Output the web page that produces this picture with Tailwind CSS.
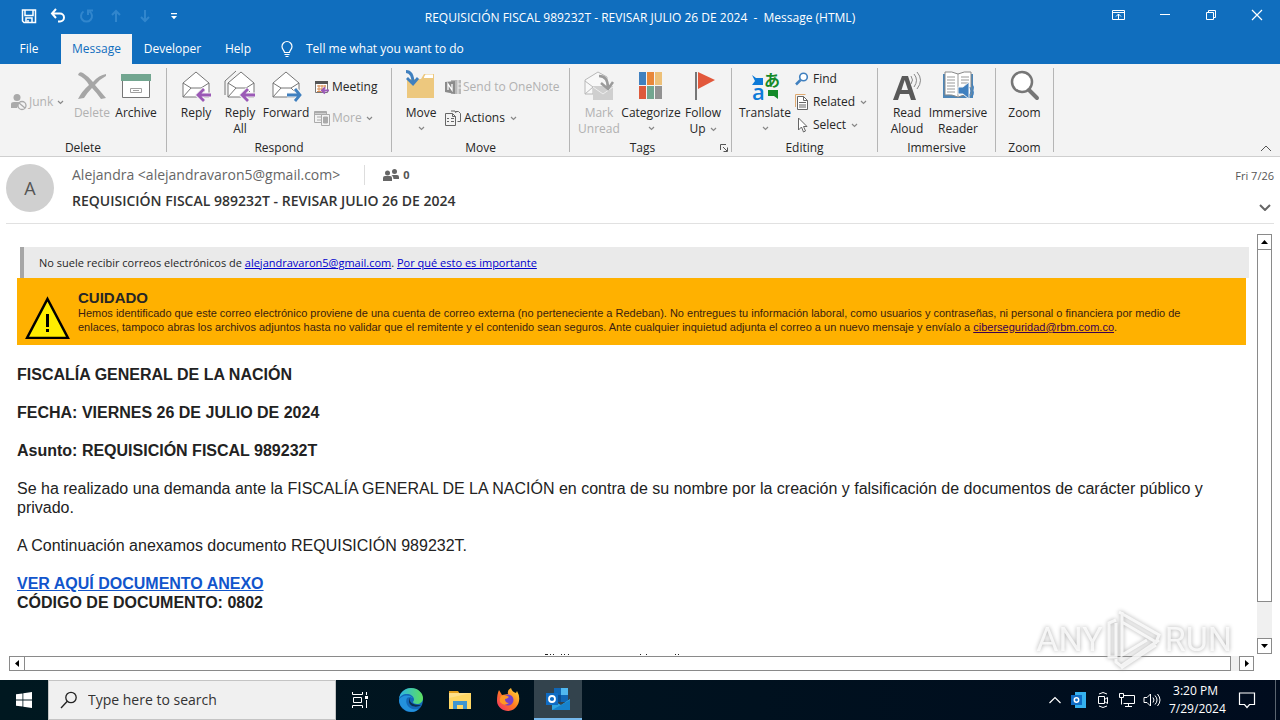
<!DOCTYPE html>
<html lang="es">
  <head>
    <meta charset="UTF-8" />
    <title>REQUISICIÓN FISCAL 989232T - Message (HTML)</title>
    <script src="https://cdn.jsdelivr.net/npm/@tailwindcss/browser@4"></script>
  </head>

  <body class="flex h-screen flex-col overflow-hidden bg-white font-['Open_Sans',sans-serif] text-xs text-[#262626]">
    <svg class="hidden">
      <symbol id="caret" viewBox="0 0 7 5"><path d="M1 1l2.5 2.5L6 1" fill="none" stroke="#888" stroke-width="1.2" /></symbol>
      <symbol id="envelope" viewBox="0 0 32 32">
        <path d="M3 13L16 2l13 11v14H3z" fill="#fff" stroke="#767676" />
        <path d="M3 13l8 5h10l8-5M3 27l8-9M21 18l4 4" fill="none" stroke="#767676" />
      </symbol>
    </svg>

    <!-- Title bar -->
    <header class="relative flex h-8 shrink-0 items-center bg-[#106ebe] text-white">
      <div class="flex items-center gap-[13px] pl-[21px]">
        <button aria-label="Save">
          <svg class="size-4" viewBox="0 0 16 16" fill="none" stroke="#fff" stroke-width="1.5"><path d="M1.500 2h13v12.500H3L1.500 13zM4 2v5.500h8V2M5 14.500V10h6v4.500M7 12v2.500" /></svg>
        </button>
        <button aria-label="Undo">
          <svg class="size-4" viewBox="0 0 16 16" fill="none" stroke="#fff" stroke-width="2"><path d="M6 1L2 5.500 6 10M2.500 5.500H10a4 4 0 0 1 0 8H8" /></svg>
        </button>
        <button aria-label="Redo" class="text-[#3186cd]">
          <svg class="size-4" viewBox="0 0 16 16" fill="none" stroke="currentColor" stroke-width="2"><path d="M4.500 3.500a5.500 5.500 0 1 0 6 0M9 7V2.500h5" /></svg>
        </button>
        <button aria-label="Previous item" class="text-[#3186cd]">
          <svg class="size-4" viewBox="0 0 16 16" fill="none" stroke="currentColor" stroke-width="2"><path d="M8 14V3M4 7l4-4 4 4" /></svg>
        </button>
        <button aria-label="Next item" class="text-[#3186cd]">
          <svg class="size-4" viewBox="0 0 16 16" fill="none" stroke="currentColor" stroke-width="2"><path d="M8 2v11M4 9l4 4 4-4" /></svg>
        </button>
        <button aria-label="Customize toolbar">
          <svg class="size-4" viewBox="0 0 16 16"><path d="M5 5h6v1.300H5zM5 8h6l-3 3.200z" fill="#fff" /></svg>
        </button>
      </div>
      <h1 class="absolute inset-x-0 top-2 text-center leading-5 whitespace-pre">REQUISICIÓN FISCAL 989232T - REVISAR JULIO 26 DE 2024  -  Message (HTML)</h1>
      <div class="z-10 ml-auto flex items-center gap-[30px] pr-[15px]">
        <button aria-label="Ribbon display options">
          <svg class="size-4" viewBox="0 0 16 16" fill="none" stroke="#fff"><path d="M1.500 2.500h12v9h-12zM1.500 4.500h12M7.500 11V6M5 8.500L7.500 6 10 8.500" /></svg>
        </button>
        <button aria-label="Minimize">
          <svg class="size-4" viewBox="0 0 16 16" fill="none" stroke="#fff"><path d="M3 6.500h10" /></svg>
        </button>
        <button aria-label="Restore">
          <svg class="size-4" viewBox="0 0 16 16" fill="none" stroke="#fff"><path d="M3.500 4.500h7v7h-7zM5.500 4.500v-2h7v7h-2" /></svg>
        </button>
        <button aria-label="Close">
          <svg class="size-4" viewBox="0 0 16 16" fill="none" stroke="#fff" stroke-width="1.200"><path d="M3 2l10 10M13 2l-10 10" /></svg>
        </button>
      </div>
    </header>

    <!-- Tabs -->
    <nav class="flex h-8 shrink-0 items-end bg-[#106ebe] text-white">
      <button class="h-[30px] w-[58px]">File</button>
      <button class="ml-[3px] h-[30px] w-[71px] bg-[#f3f3f3] text-[#106ebe]">Message</button>
      <button class="h-[30px] w-[81px]">Developer</button>
      <button class="h-[30px] w-[50px]">Help</button>
      <button class="flex h-[30px] items-center gap-[11px] pl-4">
        <svg class="h-[18px] w-4" viewBox="0 0 16 18" fill="none" stroke="#fff" stroke-width="1.200"><path d="M5.500 12.500c0-2-2.500-3-2.500-6a5 5 0 0 1 10 0c0 3-2.500 4-2.500 6zM5.500 14.500h5M6.500 16.500h3" /></svg>
        Tell me what you want to do
      </button>
    </nav>

    <!-- Ribbon -->
    <div class="flex h-[93px] shrink-0 border-b border-[#cfcfcf] bg-[#f3f3f3] py-1 leading-4">
      <section class="flex w-[167px] flex-col border-r border-[#b5b5b5]">
        <div class="flex grow">
          <button class="flex w-[70px] items-center gap-px pb-1 pl-[10px] text-[#b1b1b1]">
            <svg class="size-[18px]" viewBox="0 0 18 18"><circle cx="7" cy="4.500" r="3.500" fill="#aaa" /><path d="M1 15V11q0-2 3-2h6l-3 6z" fill="#aaa" /><circle cx="12" cy="12.500" r="4" fill="#f3f3f3" stroke="#aaa" stroke-width="1.300" /><path d="M9 10l6 5" stroke="#aaa" stroke-width="1.300" /></svg>
            Junk
            <svg class="ml-[3px] h-[5px] w-[7px]"><use href="#caret" /></svg>
          </button>
          <button class="flex w-11 flex-col items-center pt-[2px] text-[#b1b1b1]">
            <svg class="mb-[3px] size-8" viewBox="0 0 32 32" fill="#a6a6a6"><path d="M2 5q1-4 5-2 5 3 10 9Q23 5 30 4v2q-6 3-11 9 6 7 11 13l-5 1q-5-7-9-11-5 5-8 10l-6 1q4-8 11-14Q9 8 2 5z" /></svg>
            Delete
          </button>
          <button class="flex w-11 flex-col items-center pt-[2px]">
            <svg class="mb-[3px] size-8" viewBox="0 0 32 32"><path d="M2.500 9.500h27v18h-27z" fill="#fff" stroke="#767676" /><path d="M1 4h30v7H1z" fill="#72a690" /><path d="M10.500 18.500h11v4h-11zM13 20.500h6" fill="#fff" stroke="#a0a0a0" /></svg>
            Archive
          </button>
        </div>
        <h2 class="-mb-1 text-center">Delete</h2>
      </section>

      <section class="flex w-[225px] flex-col border-r border-[#b5b5b5]">
        <div class="flex grow pl-[7px]">
          <button class="flex w-11 flex-col items-center pt-[2px]">
            <svg class="mb-[3px] size-8"><use href="#envelope" /><path d="M31 25H18M24 19l-6 6 6 6" fill="none" stroke="#f3f3f3" stroke-width="5" /><path d="M31 25H18M24 19l-6 6 6 6" fill="none" stroke="#9b59b6" stroke-width="2.800" /></svg>
            Reply
          </button>
          <button class="flex w-11 flex-col items-center pt-[2px]">
            <svg class="mb-[3px] size-8"><path d="M1 25V11L12 1" fill="none" stroke="#767676" /><g><use href="#envelope" x="1" /></g><path d="M31 25H18M24 19l-6 6 6 6" fill="none" stroke="#f3f3f3" stroke-width="5" /><path d="M31 25H18M24 19l-6 6 6 6" fill="none" stroke="#9b59b6" stroke-width="2.800" /></svg>
            Reply All
          </button>
          <button class="flex w-12 flex-col items-center pt-[2px]">
            <svg class="mb-[3px] size-8"><use href="#envelope" /><path d="M17 25h13M25 19l6 6-6 6" fill="none" stroke="#f3f3f3" stroke-width="5" /><path d="M17 25h13M25 19l5 6-5 6" fill="none" stroke="#4080bf" stroke-width="2.800" /></svg>
            Forward
          </button>
          <div class="flex flex-col gap-[7px] pt-[7px] pl-1">
            <button class="flex h-6 items-center gap-[2px]">
              <svg class="size-4" viewBox="0 0 16 16" fill="none"><path d="M1.500 2.500h12v11h-12z" fill="#fff" stroke="#777" /><path d="M1 2h13v3H1z" fill="#555" /><path d="M3 7h9M3 10h5M3 12.500h4M5 6v7M8 6v7M11 6v3" stroke="#d88c50" /><path d="M15 11.500H8M11 8.500l-3 3 3 3" stroke="#9b59b6" stroke-width="2" /></svg>
              Meeting
            </button>
            <button class="flex h-6 items-center gap-[2px] text-[#b1b1b1]">
              <svg class="size-4" viewBox="0 0 16 16" fill="none" stroke="#aaa"><path d="M.500 1.500h12v11H.500zM.500 4.500h12M3 7h5M3 10h5" /><path d="M.500 2.500h12" stroke-width="2" /><path d="M7.500 4.500h8v11h-8z" fill="#f3f3f3" /><path d="M9.500 7h4v6h-4z" fill="#aaa" /></svg>
              More
              <svg class="ml-[2px] h-[5px] w-[7px]"><use href="#caret" /></svg>
            </button>
          </div>
        </div>
        <h2 class="-mb-1 text-center">Respond</h2>
      </section>

      <section class="flex w-[178px] flex-col border-r border-[#b5b5b5]">
        <div class="flex grow pl-[6px]">
          <button class="flex w-[46px] flex-col items-center pt-[2px]">
            <svg class="mb-[3px] size-8" viewBox="0 0 32 32"><path d="M2 9h14l3-5h10v24H2z" fill="#edc87e" /><path d="M19 7l1.500-2.500H28V8h-9z" fill="#fff" /><path d="M1 1.500q7 0 7 12M2 8l6 6 5-6" fill="none" stroke="#4080bf" stroke-width="2.800" /></svg>
            Move
            <svg class="mt-[5px] h-[5px] w-[7px]"><use href="#caret" /></svg>
          </button>
          <div class="flex flex-col gap-[7px] pt-[7px] pl-px">
            <button class="flex h-6 items-center gap-[2px] text-[#b1b1b1]">
              <svg class="size-4" viewBox="0 0 16 16"><path d="M6 1h10v14H6z" fill="#b9b9b9" /><path d="M13 1v14M13 5h3M13 9h3" stroke="#eee" /><path d="M0 3l10-1v13L0 13z" fill="#8b8b8b" /><path d="M3 11V5l4 6V5" fill="none" stroke="#fff" stroke-width="1.300" /></svg>
              Send to OneNote
            </button>
            <button class="flex h-6 items-center gap-[3px]">
              <svg class="size-4" viewBox="0 0 16 16" fill="none" stroke="#666"><path d="M10.500 1.500h3l2 2v8h-3" /><path d="M.500 3.500h7l3 3v9H.500zM7.500 3.500v3h3M2 8.500h2M2 11.500h2M6 8.500h3M6 11.500h3M6 1h4l1 2" /></svg>
              Actions
              <svg class="ml-[2px] h-[5px] w-[7px]"><use href="#caret" /></svg>
            </button>
          </div>
        </div>
        <h2 class="-mb-1 text-center">Move</h2>
      </section>

      <section class="relative flex w-[162px] flex-col border-r border-[#b5b5b5]">
        <div class="flex grow pl-[6px]">
          <button class="flex w-[46px] flex-col items-center pt-[2px] text-[#b1b1b1]">
            <svg class="mb-[3px] size-8" viewBox="0 0 32 32"><path d="M2 10L15 2l9 5v10H10v7H2z" fill="#f8f8f8" stroke="#b8b8b8" /><path d="M2 11l8 6-8 7" fill="none" stroke="#b8b8b8" /><path d="M10 16h20v14H10z" fill="#cfcfcf" /><path d="M10 17l10 7 10-7" fill="none" stroke="#eee" /><path d="M16 6q9 0 9 12M18 13l7 6 5-7" fill="none" stroke="#9b9b9b" stroke-width="2.500" /></svg>
            Mark Unread
          </button>
          <button class="flex w-[58px] flex-col items-center pt-[2px]">
            <svg class="mb-[3px] size-8" viewBox="0 0 32 32"><path d="M4 2h7v13H4z" fill="#4080bf" /><path d="M12 2h7v13h-7z" fill="#e8873a" /><path d="M20 2h7v13h-7z" fill="#edc078" /><path d="M4 16h7v13H4z" fill="#dd5a3c" /><path d="M12 16h7v13h-7z" fill="#72a690" /><path d="M20 16h7v13h-7z" fill="#929292" /></svg>
            Categorize
            <svg class="mt-[5px] h-[5px] w-[7px]"><use href="#caret" /></svg>
          </button>
          <button class="flex w-[46px] flex-col items-center pt-[2px]">
            <svg class="mb-[3px] size-8" viewBox="0 0 32 32"><path d="M8 2h2v28H8z" fill="#767676" /><path d="M11 2l17 8-17 9z" fill="#e2583b" /></svg>
            Follow
            <span class="flex items-center gap-1">Up <svg class="h-[5px] w-[7px]"><use href="#caret" /></svg></span>
          </button>
        </div>
        <h2 class="-mb-1 pr-4 text-center">Tags</h2>
        <button aria-label="Tags options" class="absolute right-[3px] bottom-0">
          <svg class="size-2" viewBox="0 0 8 8" fill="none" stroke="#555"><path d="M.500 6V.500H6M3 3l4 4M7.500 3.500v4h-4" /></svg>
        </button>
      </section>

      <section class="flex w-[146px] flex-col border-r border-[#b5b5b5]">
        <div class="flex grow pl-[6px]">
          <button class="flex w-[54px] flex-col items-center pt-[2px]">
            <svg class="mb-[3px] size-8 overflow-visible" viewBox="0 0 32 32"><path d="M3 5l4 3h7v7H3l3-4z" fill="#0d7ad8" /><path d="M29 29l-4-3h-6v-6h10z" fill="#148a28" /><text x="3" y="30" font-size="22" font-weight="600" fill="#0d7ad8">a</text><text x="15" y="16" font-family="Noto Sans CJK JP" font-size="16" font-weight="700" fill="#148a28">あ</text></svg>
            Translate
            <svg class="mt-[5px] h-[5px] w-[7px]"><use href="#caret" /></svg>
          </button>
          <div class="flex flex-col pl-[2px]">
            <button class="flex h-[22px] items-center gap-[3px]">
              <svg class="size-4" viewBox="0 0 16 16" fill="none" stroke="#4080bf"><circle cx="9.500" cy="6" r="3.800" fill="#fff" stroke-width="1.600" /><path d="M6.500 9L2 13.500" stroke-width="2.500" /></svg>
              Find
            </button>
            <button class="flex h-6 items-center gap-[3px]">
              <svg class="size-4" viewBox="0 0 16 16" fill="none" stroke="#666"><path d="M1.500 13V.500h10" stroke="#e0aa70" /><path d="M3.500 2.500h6l4 4v9h-10z" fill="#fff" /><path d="M9.500 2.500v4h4M5 8.500h7M5 11h7M5 13h7" /></svg>
              Related
              <svg class="ml-[2px] h-[5px] w-[7px]"><use href="#caret" /></svg>
            </button>
            <button class="flex h-[22px] items-center gap-[3px]">
              <svg class="size-4" viewBox="0 0 16 16" fill="#fff" stroke="#666"><path d="M4.500 1v12l3-3 2 5 2-1-2-4.500H13z" /></svg>
              Select
              <svg class="ml-[2px] h-[5px] w-[7px]"><use href="#caret" /></svg>
            </button>
          </div>
        </div>
        <h2 class="-mb-1 text-center">Editing</h2>
      </section>

      <section class="flex w-[118px] flex-col border-r border-[#b5b5b5]">
        <div class="flex grow pl-[6px]">
          <button class="flex w-[46px] flex-col items-center pt-[2px]">
            <svg class="mb-[3px] size-8" viewBox="0 0 32 32"><path d="M2 30L11 6h6l8 24h-5l-2-6H9l-2 6zM10.500 20H17l-3.300-10z" fill="#595959" /><path d="M20 6q3 4 0 8M23 4q5 6 0 13M26 2q7 8 0 17" fill="none" stroke="#888" /></svg>
            Read Aloud
          </button>
          <button class="flex w-14 flex-col items-center pt-[2px]">
            <svg class="mb-[3px] size-8" viewBox="0 0 32 32"><path d="M1 4h30v24H1z" fill="#4d86b8" /><path d="M3 2q7-1 13 2 6-3 13-2v23q-7-1-13 2-6-3-13-2z" fill="#fff" stroke="#888" /><path d="M16 4v22M5 7h8M5 10h8M5 13h8M5 16h8M5 19h8M5 22h8M19 7h8M19 10h8M19 13h8" stroke="#999" /><path d="M16 17h5l6-5v17l-6-5h-5z" fill="#4080bf" stroke="#f3f3f3" /><path d="M28 17q2 4 0 8M30 14q4 6 0 13" fill="none" stroke="#4080bf" /></svg>
            Immersive Reader
          </button>
        </div>
        <h2 class="-mb-1 text-center">Immersive</h2>
      </section>

      <section class="flex w-[58px] flex-col border-r border-[#b5b5b5]">
        <div class="flex grow justify-center">
          <button class="flex w-11 flex-col items-center pt-[2px]">
            <svg class="mb-[3px] size-8" viewBox="0 0 32 32"><circle cx="13" cy="12" r="10" fill="#fff" stroke="#767676" stroke-width="2.500" /><path d="M20 20l8 8" stroke="#767676" stroke-width="4" stroke-linecap="round" /></svg>
            Zoom
          </button>
        </div>
        <h2 class="-mb-1 text-center">Zoom</h2>
      </section>

      <button aria-label="Collapse ribbon" class="mt-auto mr-2 ml-auto">
        <svg class="h-[7px] w-3" viewBox="0 0 12 7" fill="none" stroke="#555"><path d="M1 6l5-5 5 5" /></svg>
      </button>
    </div>

    <!-- Message header -->
    <div class="mx-[6px] flex h-[67px] shrink-0 border-b border-[#e1e1e1] pt-[7px]">
      <div class="flex size-12 items-center justify-center rounded-full bg-[#d0d0d0] text-lg text-[#555]">A</div>
      <div class="pl-[18px]">
        <div class="flex h-[22px] items-center">
          <span class="text-sm text-[#666]">Alejandra &lt;alejandravaron5@gmail.com&gt;</span>
          <span class="ml-6 flex h-5 items-center gap-1 border-l border-[#ddd] pl-[18px] text-[11px] font-bold text-[#555]">
            <svg class="size-4" viewBox="0 0 16 16" fill="#666"><circle cx="4.500" cy="6" r="2.500" /><path d="M0 14v-3q0-2 2-2h5q2 0 2 2v3z" /><circle cx="11.500" cy="4.500" r="2.500" /><path d="M10 8h4q2 0 2 2v2h-5.500q0-3-2-3.500z" /></svg>
            0
          </span>
        </div>
        <h2 class="text-sm leading-[30px] font-semibold text-[#333]">REQUISICIÓN FISCAL 989232T - REVISAR JULIO 26 DE 2024</h2>
      </div>
      <div class="ml-auto flex flex-col items-end justify-between pt-1 pb-3 text-[11px] leading-4 text-[#555]">
        Fri 7/26
        <button aria-label="Expand header" class="pr-[3px]">
          <svg class="h-[7px] w-3" viewBox="0 0 12 7" fill="none" stroke="#666" stroke-width="2"><path d="M1 1l5 5 5-5" /></svg>
        </button>
      </div>
    </div>

    <!-- Message body -->
    <div class="relative flex min-h-0 grow flex-col bg-white pr-2 pb-[9px] pl-[9px]">
      <div class="flex min-h-0 grow">
        <main class="flex min-w-0 grow flex-col overflow-hidden pt-[23px] pr-2 pl-2 font-['Liberation_Sans',sans-serif] text-base leading-[19px]">
          <div class="ml-[3px] flex h-[31px] shrink-0 items-center border-l-4 border-[#a6a6a6] bg-[#eaeaea] pl-[15px] font-['Open_Sans',sans-serif] text-[11px]">
            <p>No suele recibir correos electrónicos de <a href="#" class="text-[#0000cc] underline">alejandravaron5@gmail.com</a>. <a href="#" class="text-[#0000cc] underline">Por qué esto es importante</a></p>
          </div>
          <div class="mr-[3px] flex min-h-[67px] shrink-0 bg-[#ffb100] pt-3 pl-2 text-[#3a1d10]">
            <svg class="mt-[5px] h-11 w-[45px] shrink-0" viewBox="0 0 45 44"><path d="M22.500 4L43 43H2z" fill="#ffed00" stroke="#000" stroke-width="2.500" /><path d="M21 19h3v13h-3zM21 34h3v3h-3z" fill="#000" /></svg>
            <div class="pl-2 text-[11px] leading-[14px]">
              <p class="text-[15px] leading-4 font-bold text-[#262626]">CUIDADO</p>
              <p>Hemos identificado que este correo electrónico proviene de una cuenta de correo externa (no perteneciente a Redeban). No entregues tu información laboral, como usuarios y contraseñas, ni personal o financiera por medio de<br />enlaces, tampoco abras los archivos adjuntos hasta no validar que el remitente y el contenido sean seguros. Ante cualquier inquietud adjunta el correo a un nuevo mensaje y envíalo a <a href="#" class="text-[#3a0050] underline">ciberseguridad@rbm.com.co</a>.</p>
            </div>
          </div>
          <div class="flex flex-col gap-[19px] pt-5 text-[#222]">
            <p class="font-bold">FISCALÍA GENERAL DE LA NACIÓN</p>
            <p class="font-bold">FECHA: VIERNES 26 DE JULIO DE 2024</p>
            <p class="font-bold">Asunto: REQUISICIÓN FISCAL 989232T</p>
            <p>Se ha realizado una demanda ante la FISCALÍA GENERAL DE LA NACIÓN en contra de su nombre por la creación y falsificación de documentos de carácter público y privado.</p>
            <p>A Continuación anexamos documento REQUISICIÓN 989232T.</p>
            <p class="font-bold"><a href="#" class="text-[#1155cc] underline">VER AQUÍ DOCUMENTO ANEXO</a><br />CÓDIGO DE DOCUMENTO: 0802</p>
          </div>
          <!-- tops of the next line, scrolled out of view -->
          <svg aria-hidden="true" class="mt-auto mr-11 h-1 w-36 shrink-0 self-center" viewBox="0 0 144 4"><path d="M6 2.500h3M11 2.500h1M14 2.500h1M22 2.500h1M25 2.500h1M29 2.500h1M101 2.500h1M107 2.500h1M136 2.500h1M139 2.500h1" stroke="#222" /></svg>
        </main>
        <div class="mt-[10px] mb-[2px] flex w-[15px] shrink-0 flex-col bg-[#f0f0f0]">
          <button aria-label="Scroll up" class="flex h-4 items-center justify-center border border-[#8a8a8a] bg-white">
            <svg class="h-1 w-[7px]" viewBox="0 0 7 4"><path d="M0 4l3.500-4L7 4z" /></svg>
          </button>
          <div class="-mt-px grow border border-[#8a8a8a] bg-white"></div>
          <button aria-label="Scroll down" class="mt-9 flex h-4 items-center justify-center border border-[#8a8a8a] bg-white">
            <svg class="h-1 w-[7px]" viewBox="0 0 7 4"><path d="M0 0h7L3.500 4z" /></svg>
          </button>
        </div>
      </div>
      <div class="mr-[18px] flex h-[15px] shrink-0 bg-[#f0f0f0]">
        <button aria-label="Scroll left" class="flex w-4 items-center justify-center border border-[#8a8a8a] bg-white">
          <svg class="h-[7px] w-1" viewBox="0 0 4 7"><path d="M4 0v7L0 3.500z" /></svg>
        </button>
        <div class="-ml-px grow border border-[#8a8a8a] bg-white"></div>
        <button aria-label="Scroll right" class="ml-2 flex w-[15px] items-center justify-center border border-[#8a8a8a] bg-white">
          <svg class="h-[7px] w-1" viewBox="0 0 4 7"><path d="M0 0v7l4-3.500z" /></svg>
        </button>
      </div>

      <!-- Watermark over the page -->
      <div class="pointer-events-none absolute right-12 bottom-2 flex h-16 items-center font-['Roboto',sans-serif] text-[34px] text-white/80 drop-shadow-[0_0_2px_#999]">
        ANY
        <svg class="h-[62px] w-[62px]" viewBox="0 0 58 62" fill="none" stroke="#fff" stroke-opacity=".8" stroke-width="3"><path d="M11 11L4 14V48h7V14M14 3L54 26l-3 7L17 13V3M17 13V46l25-15M54 31L16 57 11 53V50M51 36L16 59" /></svg>
        RUN
      </div>
    </div>

    <!-- Taskbar -->
    <footer class="flex h-10 shrink-0 items-stretch bg-linear-to-r from-[#001820] to-[#000c1e] text-white">
      <button aria-label="Start" class="flex w-12 items-center justify-center">
        <svg class="size-4" viewBox="0 0 16 16" fill="#fff"><path d="M0 2.300l6.500-.9v6.200H0zM7.300 1.300L16 0v7.600H7.300zM0 8.400h6.500v6.200L0 13.700zM7.300 8.400H16V16l-8.700-1.300z" /></svg>
      </button>
      <label class="flex w-72 items-center gap-[10px] border border-[#c4c4c4] bg-[#f0f0f0] pl-[11px]">
        <svg class="size-[18px]" viewBox="0 0 18 18" fill="none" stroke="#222" stroke-width="1.300"><circle cx="11" cy="6.500" r="5.200" /><path d="M7.300 10.200L1 17" /></svg>
        <input type="text" aria-label="Search" placeholder="Type here to search" class="min-w-0 grow text-sm outline-none placeholder:text-[#333]" />
      </label>
      <button aria-label="Task view" class="flex w-12 items-center justify-center">
        <svg class="size-4" viewBox="0 0 16 16" fill="none" stroke="#fff"><path d="M.500 0v2.500h10V0M.500 16v-2.500h10V16M1.500 5.500h8v5h-8zM14.500 0v3M14.500 8v8" /><path d="M13 4h3v3h-3z" fill="#fff" stroke="none" /></svg>
      </button>
      <button aria-label="Edge" class="flex w-[54px] items-center justify-center">
        <svg class="size-6" viewBox="0 0 24 24"><defs><linearGradient id="edge-top"><stop stop-color="#2bb4e8" /><stop offset="1" stop-color="#5de05e" /></linearGradient></defs><circle cx="12" cy="12" r="12" fill="#1368b8" /><path d="M0 11C1 4 6 0 12 0c7 0 12 5 12 10 0 4-3 6-6 6-2 0-4-1-4-2 0-.500 1-1 1-2.500C15 8 11 6 8 6c-4 0-7 2-8 5z" fill="url(#edge-top)" /><path d="M8 10c-3 6 3 13 12 11-8 7-20 0-20-9 2-5 10-6 14-2-3-1-5-1-6 0z" fill="#2391dc" /><path d="M12 9c-3 2-1 9 10 8-4 3-11 2-12-3 0-2 0-4 2-5z" fill="#0b2f4f" /></svg>
      </button>
      <button aria-label="File Explorer" class="flex w-11 items-center justify-center">
        <svg class="h-5 w-[22px]" viewBox="0 0 22 20"><path d="M0 1h9l2 3H0z" fill="#e6a21e" /><path d="M0 3h22v16H0z" fill="#ffd764" /><path d="M4 19v-8h14v8h-4v-4H8v4z" fill="#3f96d0" /><path d="M0 8V3h22z" fill="#ffe08a" /></svg>
      </button>
      <button aria-label="Firefox" class="flex w-[52px] items-center justify-center">
        <svg class="size-6" viewBox="0 0 24 24"><defs><linearGradient id="fox" x1="1" y1="0" x2="0" y2="1"><stop stop-color="#ffe43c" /><stop offset=".5" stop-color="#ff7a20" /><stop offset="1" stop-color="#f0286e" /></linearGradient></defs><path d="M3 2l3 5 6-1q-1-4 3-6 1 4 5 5l1-2q3 5 2 10c-1 6-6 10-11 10S1 19 1 13q0-7 2-11z" fill="url(#fox)" /><circle cx="12" cy="12" r="5.500" fill="#7540c8" /><path d="M5 8q5-2 8 1-2 2-4 2 0 4 4 4-5 4-9-1-1-3 1-6z" fill="#ff9824" /></svg>
      </button>
      <button aria-label="Outlook" class="flex w-12 items-center justify-center border-b-2 border-[#76b9ed] bg-[#33434d]">
        <svg class="size-6" viewBox="0 0 24 24"><path d="M8 1h14v14H8z" fill="#1066b5" /><path d="M15 1h7v7h-7z" fill="#50b8f0" /><path d="M8 8h7v7H8z" fill="#0b4e92" /><path d="M6 13l9 5 9-6v11H6z" fill="#2fa5e0" /><path d="M6 23l18-10v10z" fill="#1782cc" /><path d="M0 6h12v12H0z" fill="#0f6cc4" /><circle cx="6" cy="12" r="3" fill="none" stroke="#fff" stroke-width="1.800" /></svg>
      </button>
      <div class="ml-auto flex items-center gap-2">
        <button aria-label="Show hidden icons">
          <svg class="size-4" viewBox="0 0 16 16" fill="none" stroke="#fff" stroke-width="1.200"><path d="M2.500 11L8 5.500l5.500 5.500" /></svg>
        </button>
        <svg class="size-4" viewBox="0 0 16 16"><path d="M4 0h11v16H4z" fill="#35b1ee" /><path d="M0 3h11v10H0z" fill="#0f6cc4" /><circle cx="5.500" cy="8" r="2.200" fill="none" stroke="#fff" stroke-width="1.500" /></svg>
        <svg class="size-4" viewBox="0 0 16 16" fill="none" stroke="#fff"><path d="M3.500 4.500h6v7h-6zM9.500 7.500l3-2v6l-3-2M4 2q4-3 8 0M4 14q4 3 8 0" /></svg>
        <svg class="size-4" viewBox="0 0 16 16" fill="none" stroke="#fff"><path d="M4 3.500h11.500v8H4.500M.500 1.500h4v4h-4zM2.500 5.500v7M9.500 11.500v3M6 14.500h7" /></svg>
        <svg class="size-[18px]" viewBox="0 0 18 18" fill="none" stroke="#fff"><path d="M1 6.500h3l3.500-3.500v12L4 11.500H1zM10 6.500q2 2.500 0 5M12 4.500q4 4.500 0 9M14.500 3q5 6 0 12" /></svg>
        <time class="w-[53px] text-center text-xs leading-[18px] whitespace-nowrap">3:20 PM<br />7/29/2024</time>
        <button aria-label="Notifications" class="pr-[11px] pl-2">
          <svg class="size-[18px]" viewBox="0 0 18 18" fill="none" stroke="#fff" stroke-width="1.200"><path d="M1.500 2h15v11.500h-5L9 16.500l-2.500-3h-5z" /></svg>
        </button>
        <span class="mr-1 h-10 w-px bg-[#5a6570]"></span>
      </div>
    </footer>
  </body>
</html>
